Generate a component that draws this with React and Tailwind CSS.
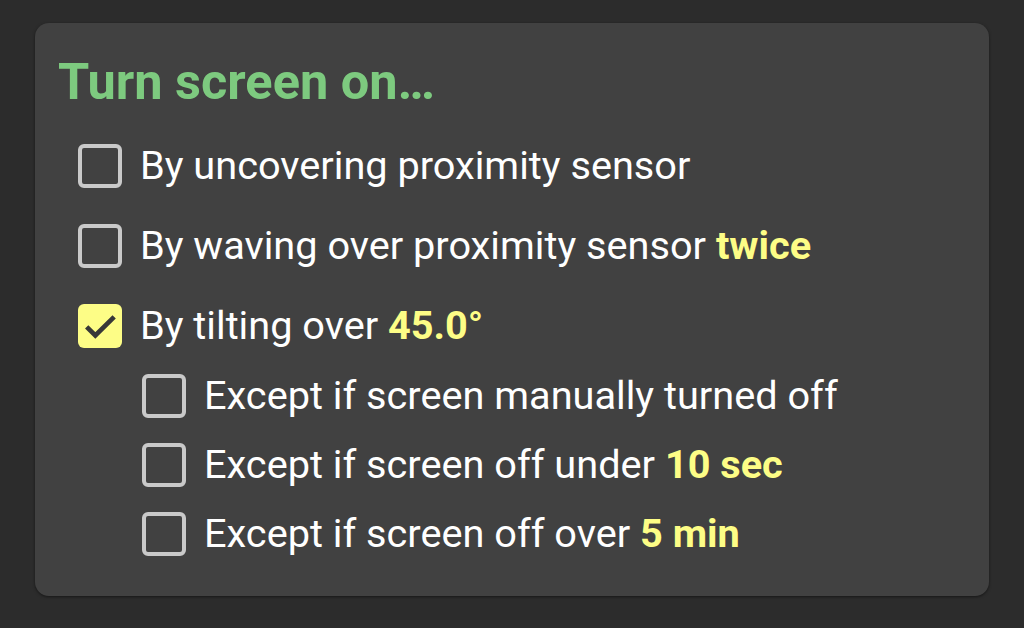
import React from 'react';

const ROWS = [
  { label: 'By uncovering proximity sensor', checked: false },
  { label: 'By waving over proximity sensor ', value: 'twice', checked: false },
  { label: 'By tilting over ', value: '45.0°', checked: true },
];

const SUB_ROWS = [
  { label: 'Except if screen manually turned off' },
  { label: 'Except if screen off under ', value: '10 sec' },
  { label: 'Except if screen off over ', value: '5 min' },
];

function Check({ checked }) {
  if (checked) {
    return (
      <div className="w-[44px] h-[44px] shrink-0 rounded-[6px] bg-[#fdfd86] flex items-center justify-center">
        <svg viewBox="0 0 24 24" className="w-[40px] h-[40px]" fill="none" stroke="#383838" strokeWidth="2.8">
          <path d="M4 12.5l5.2 5.2L20.5 6.5" />
        </svg>
      </div>
    );
  }
  return <div className="w-[44px] h-[44px] shrink-0 rounded-[6px] border-[4px] border-[#c9c9c9]" />;
}

function Row({ label, value, checked }) {
  return (
    <div className="flex items-center gap-[18px]">
      <Check checked={checked} />
      <span className="text-[39.7px] text-white leading-none whitespace-nowrap">
        {label}
        {value && <span className="font-bold text-[#fdfd86]">{value}</span>}
      </span>
    </div>
  );
}

export default function App() {
  return (
    <div className="w-[1024px] h-[628px] bg-[#2c2c2c] pt-[23px] pl-[35px]" style={{ fontFamily: 'Roboto, "Liberation Sans", sans-serif' }}>
      <div className="w-[954px] h-[573px] bg-[#414141] rounded-[14px] shadow-[0_1px_3px_rgba(0,0,0,0.5)] pl-[43px] pt-[34px]">
        <h1 className="-ml-[20px] text-[50.5px] font-bold text-[#7dca7f] leading-none">Turn screen on…</h1>
        <div className="mt-[36px] flex flex-col gap-[36px]">
          {ROWS.map((r) => (
            <Row key={r.label} {...r} />
          ))}
        </div>
        <div className="mt-[26px] ml-[64px] flex flex-col gap-[25px]">
          {SUB_ROWS.map((r) => (
            <Row key={r.label} {...r} />
          ))}
        </div>
      </div>
    </div>
  );
}
